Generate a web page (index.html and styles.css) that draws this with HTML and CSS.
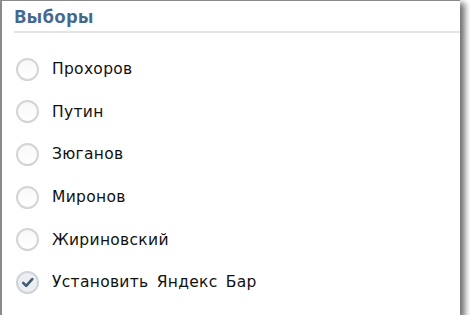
FILE: index.html
```html
<!DOCTYPE html>
<html>
<head>
<meta charset="utf-8">
<link rel="stylesheet" href="styles.css">
</head>
<body>
<div class="panel">
  <div class="header"><h1 class="title">Выборы</h1></div>
  <ul class="options">
    <li class="option"><span class="radio"></span><span class="label">Прохоров</span></li>
    <li class="option"><span class="radio"></span><span class="label">Путин</span></li>
    <li class="option"><span class="radio"></span><span class="label">Зюганов</span></li>
    <li class="option"><span class="radio"></span><span class="label">Миронов</span></li>
    <li class="option"><span class="radio"></span><span class="label">Жириновский</span></li>
    <li class="option"><span class="radio checked"><svg viewBox="0 0 22 22" width="22" height="22"><path d="M6 11.5 L9.5 15 L16.5 7" fill="none" stroke="#3f5b75" stroke-width="3" stroke-linecap="round" stroke-linejoin="round"/></svg></span><span class="label">Установить Яндекс Бар</span></li>
  </ul>
</div>
</body>
</html>
```
FILE: styles.css
```css
html, body {
  margin: 0;
  padding: 0;
  background: #ffffff;
}
.panel {
  box-sizing: border-box;
  width: 460px;
  height: 315px;
  background: #ffffff;
  border-top: 1px solid #8a8a8a;
  border-left: 2px solid #8a8a8a;
  box-shadow: 4px 4px 6px 1px rgba(0,0,0,0.55);
  padding: 0 0 0 12px;
  overflow: hidden;
}
.header {
  border-bottom: 2px solid #e4e4e4;
  height: 32px;
  box-sizing: border-box;
}
.title {
  margin: 0;
  padding-top: 2px;
  font-family: "Noto Sans", "Open Sans", sans-serif;
  font-weight: bold;
  font-size: 18.5px;
  line-height: 25px;
  letter-spacing: 0.2px;
  color: #45688e;
}
.options {
  list-style: none;
  margin: 0;
  padding: 15px 0 0 0;
}
.option {
  display: flex;
  align-items: center;
  gap: 13px;
  height: 42.6px;
}
.radio {
  box-sizing: border-box;
  width: 23px;
  height: 23px;
  margin-left: 2px;
  border-radius: 50%;
  border: 2px solid #d4d4d4;
  background: linear-gradient(#f8f8f8, #ffffff);
  display: flex;
  align-items: center;
  justify-content: center;
}
.radio svg {
  display: block;
  width: 19px;
  height: 19px;
}
.radio.checked {
  background: #eceff2;
  border-color: #cfd4d9;
}
.label {
  font-family: "DejaVu Sans", sans-serif;
  font-size: 15.5px;
  letter-spacing: 0.3px;
  word-spacing: 3px;
  color: #111111;
}
```
